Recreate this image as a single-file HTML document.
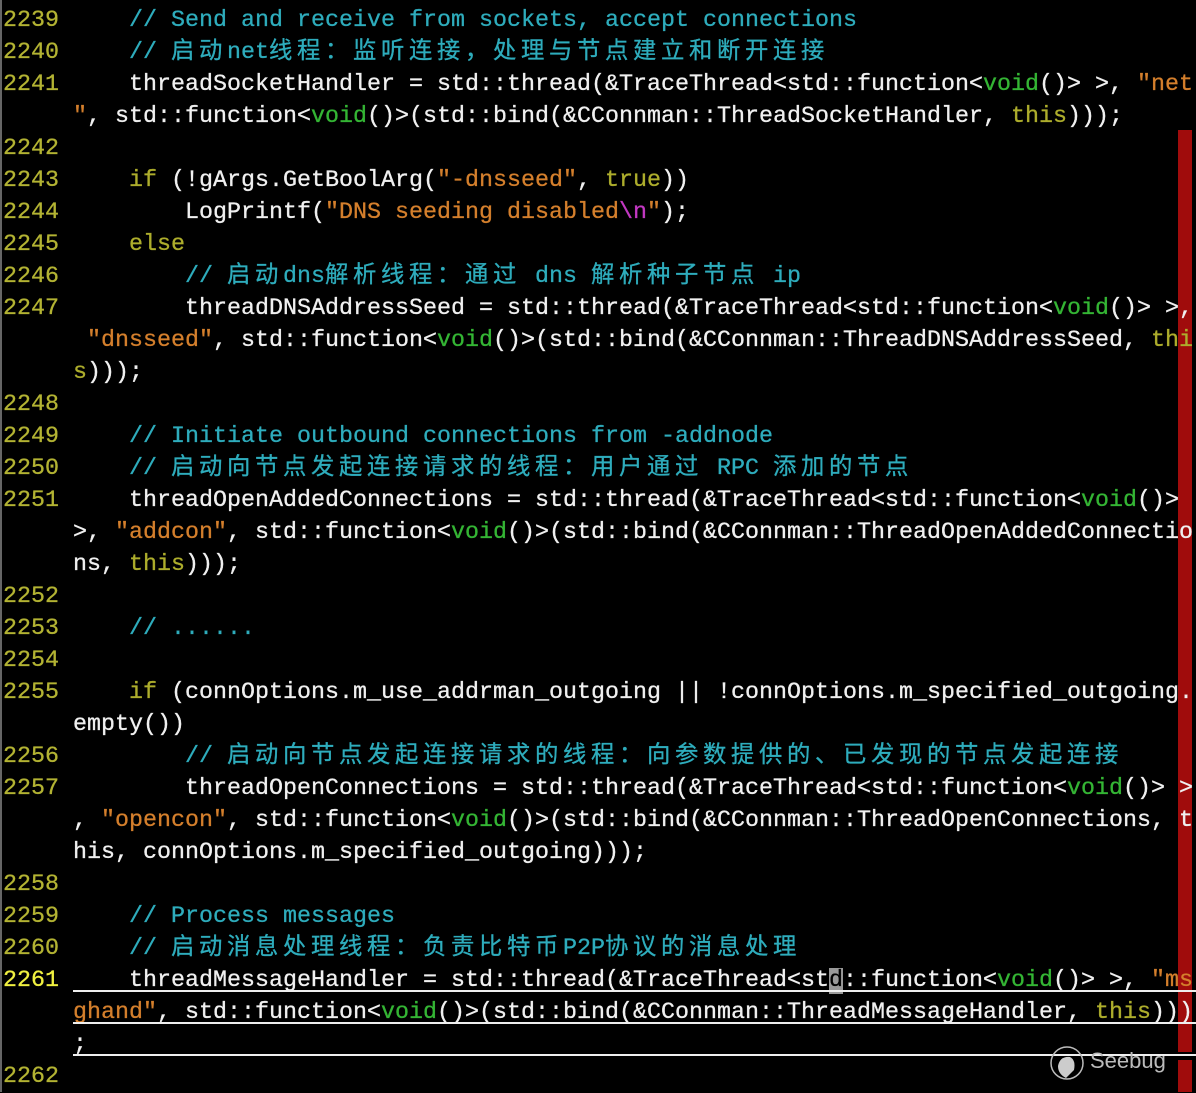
<!DOCTYPE html>
<html><head><meta charset="utf-8"><style>
html,body{margin:0;padding:0;background:#000;width:1196px;height:1092px;overflow:hidden}
.r{position:absolute;left:3px;width:1190px;height:32px;line-height:32px;padding-top:2px;white-space:pre;overflow:hidden;font-family:"Liberation Mono","Noto Sans CJK SC",monospace;font-size:23.33px;color:#f0f0f0;z-index:2;-webkit-text-stroke:0.3px currentColor}
.n{color:#b3b333}.c{color:#2eacbc}.s{color:#d47f2c}.k{color:#adad2c}.v{color:#34b534}.m{color:#c238c2}
.j{letter-spacing:4.67px}
.u{position:absolute;left:73px;width:1123px;height:2px;background:#eee;z-index:3}
</style></head><body>
<div style="position:absolute;left:0;top:0;width:2px;height:1092px;background:#666"></div>
<div style="position:absolute;left:1178px;top:130px;width:14px;height:922px;background:#a00c0c"></div>
<div style="position:absolute;left:1178px;top:1060px;width:14px;height:32px;background:#a00c0c"></div>
<div class="r" style="top:3px"><span class="n">2239 </span><span class="c">    // Send and receive from sockets, accept connections</span></div>
<div class="r" style="top:35px"><span class="n">2240 </span><span class="c">    // <span class="j">启动</span>net<span class="j">线程：监听连接，处理与节点建立和断开连接</span></span></div>
<div class="r" style="top:67px"><span class="n">2241 </span>    threadSocketHandler = std::thread(&amp;TraceThread&lt;std::function&lt;<span class="v">void</span>()&gt; &gt;, <span class="s">"net</span></div>
<div class="r" style="top:99px">     <span class="s">"</span>, std::function&lt;<span class="v">void</span>()&gt;(std::bind(&amp;CConnman::ThreadSocketHandler, <span class="k">this</span>)));</div>
<div class="r" style="top:131px"><span class="n">2242 </span></div>
<div class="r" style="top:163px"><span class="n">2243 </span>    <span class="k">if</span> (!gArgs.GetBoolArg(<span class="s">"-dnsseed"</span>, <span class="k">true</span>))</div>
<div class="r" style="top:195px"><span class="n">2244 </span>        LogPrintf(<span class="s">"DNS seeding disabled<span class="m">\n</span>"</span>);</div>
<div class="r" style="top:227px"><span class="n">2245 </span>    <span class="k">else</span></div>
<div class="r" style="top:259px"><span class="n">2246 </span><span class="c">        // <span class="j">启动</span>dns<span class="j">解析线程：通过</span> dns <span class="j">解析种子节点</span> ip</span></div>
<div class="r" style="top:291px"><span class="n">2247 </span>        threadDNSAddressSeed = std::thread(&amp;TraceThread&lt;std::function&lt;<span class="v">void</span>()&gt; &gt;,</div>
<div class="r" style="top:323px">      <span class="s">"dnsseed"</span>, std::function&lt;<span class="v">void</span>()&gt;(std::bind(&amp;CConnman::ThreadDNSAddressSeed, <span class="k">thi</span></div>
<div class="r" style="top:355px">     <span class="k">s</span>)));</div>
<div class="r" style="top:387px"><span class="n">2248 </span></div>
<div class="r" style="top:419px"><span class="n">2249 </span><span class="c">    // Initiate outbound connections from -addnode</span></div>
<div class="r" style="top:451px"><span class="n">2250 </span><span class="c">    // <span class="j">启动向节点发起连接请求的线程：用户通过</span> RPC <span class="j">添加的节点</span></span></div>
<div class="r" style="top:483px"><span class="n">2251 </span>    threadOpenAddedConnections = std::thread(&amp;TraceThread&lt;std::function&lt;<span class="v">void</span>()&gt;</div>
<div class="r" style="top:515px">     &gt;, <span class="s">"addcon"</span>, std::function&lt;<span class="v">void</span>()&gt;(std::bind(&amp;CConnman::ThreadOpenAddedConnectio</div>
<div class="r" style="top:547px">     ns, <span class="k">this</span>)));</div>
<div class="r" style="top:579px"><span class="n">2252 </span></div>
<div class="r" style="top:611px"><span class="n">2253 </span><span class="c">    // ......</span></div>
<div class="r" style="top:643px"><span class="n">2254 </span></div>
<div class="r" style="top:675px"><span class="n">2255 </span>    <span class="k">if</span> (connOptions.m_use_addrman_outgoing || !connOptions.m_specified_outgoing.</div>
<div class="r" style="top:707px">     empty())</div>
<div class="r" style="top:739px"><span class="n">2256 </span><span class="c">        // <span class="j">启动向节点发起连接请求的线程：向参数提供的、已发现的节点发起连接</span></span></div>
<div class="r" style="top:771px"><span class="n">2257 </span>        threadOpenConnections = std::thread(&amp;TraceThread&lt;std::function&lt;<span class="v">void</span>()&gt; &gt;</div>
<div class="r" style="top:803px">     , <span class="s">"opencon"</span>, std::function&lt;<span class="v">void</span>()&gt;(std::bind(&amp;CConnman::ThreadOpenConnections, t</div>
<div class="r" style="top:835px">     his, connOptions.m_specified_outgoing)));</div>
<div class="r" style="top:867px"><span class="n">2258 </span></div>
<div class="r" style="top:899px"><span class="n">2259 </span><span class="c">    // Process messages</span></div>
<div class="r" style="top:931px"><span class="n">2260 </span><span class="c">    // <span class="j">启动消息处理线程：负责比特币</span>P2P<span class="j">协议的消息处理</span></span></div>
<div class="r" style="top:963px"><span style="color:#f0f040">2261 </span>    threadMessageHandler = std::thread(&amp;TraceThread&lt;st<span style="background:#999;color:#000">d</span>::function&lt;<span class="v">void</span>()&gt; &gt;, <span class="s">"ms</span></div>
<div class="r" style="top:995px">     <span class="s">ghand"</span>, std::function&lt;<span class="v">void</span>()&gt;(std::bind(&amp;CConnman::ThreadMessageHandler, <span class="k">this</span>)))</div>
<div class="r" style="top:1027px">     ;</div>
<div class="r" style="top:1059px"><span class="n">2262 </span></div>
<div class="u" style="top:990px"></div>
<div class="u" style="top:1022px"></div>
<div class="u" style="top:1054px"></div>
<svg style="position:absolute;left:1048px;top:1044px;z-index:4" width="40" height="40" viewBox="0 0 40 40"><circle cx="19" cy="19" r="16" fill="none" stroke="#bbb" stroke-width="1.5"/><path d="M10 22 Q12 12 22 13 Q28 16 26 26 L18 34 Q10 30 10 22Z" fill="#ccc"/></svg>
<div style="position:absolute;left:1090px;top:1048px;font-family:'Liberation Sans',sans-serif;font-size:22px;color:#bbb;z-index:4">Seebug</div>
</body></html>
